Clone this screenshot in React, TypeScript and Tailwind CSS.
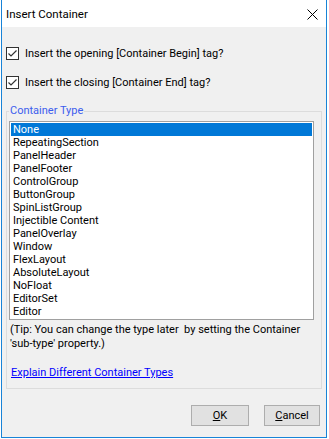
import React, { useState } from 'react';

const TYPES = [
  'None',
  'RepeatingSection',
  'PanelHeader',
  'PanelFooter',
  'ControlGroup',
  'ButtonGroup',
  'SpinListGroup',
  'Injectible Content',
  'PanelOverlay',
  'Window',
  'FlexLayout',
  'AbsoluteLayout',
  'NoFloat',
  'EditorSet',
  'Editor',
];

function CheckBox({ checked, onToggle, label }: { checked: boolean; onToggle: () => void; label: string }) {
  return (
    <label className="flex h-[13px] items-center gap-[6px] cursor-default" onClick={onToggle}>
      <span className="flex h-[13px] w-[13px] shrink-0 items-center justify-center border border-[#333333] bg-white">
        {checked && (
          <svg width="11" height="11" viewBox="0 0 11 11">
            <polyline points="1.5,5.5 4,8 9.5,2.5" fill="none" stroke="#333333" strokeWidth="1.2" />
          </svg>
        )}
      </span>
      <span className="leading-[13px] text-black">{label}</span>
    </label>
  );
}

export default function App() {
  const [openTag, setOpenTag] = useState(true);
  const [closeTag, setCloseTag] = useState(true);
  const [selected, setSelected] = useState('None');

  return (
    <div className="h-[439px] w-[329px] bg-white font-['Roboto',sans-serif] text-[11px] text-black">
      <div className="ml-px flex h-[438px] w-[326px] flex-col border-x border-b border-[#1883d7]">
        {/* title bar */}
        <div className="flex h-[27px] shrink-0 items-center justify-between bg-white pl-[4px] pr-[8px] pt-[2px]">
          <span className="text-[11.5px] text-black">Insert Container</span>
          <svg width="11" height="11" viewBox="0 0 11 11" className="mb-[1px]">
            <path d="M0.5 0.5 L10.5 10.5 M10.5 0.5 L0.5 10.5" stroke="#000" strokeWidth="1" />
          </svg>
        </div>

        {/* body */}
        <div className="flex flex-1 flex-col bg-[#f0f0f0] px-[4px] pt-[20px]">
          <CheckBox checked={openTag} onToggle={() => setOpenTag(!openTag)} label="Insert the opening [Container Begin] tag?" />
          <div className="mt-[16px]">
            <CheckBox checked={closeTag} onToggle={() => setCloseTag(!closeTag)} label="Insert the closing [Container End] tag?" />
          </div>

          {/* group box */}
          <div className="relative mt-[22px] h-[278px] border border-[#dcdcdc] pl-[2px] pt-[9px]">
            <span className="absolute -top-[8px] left-[2px] bg-[#f0f0f0] px-px leading-[14px] text-[#3c5dee]">
              Container Type
            </span>
            <div className="h-[199px] w-[305px] border border-[#a0a0a0] bg-white p-px">
              {TYPES.map((t) => (
                <div
                  key={t}
                  onClick={() => setSelected(t)}
                  className={
                    t === selected
                      ? 'h-[13px] bg-[#0078d7] pl-[2px] leading-[13px] text-white'
                      : 'h-[13px] pl-[2px] leading-[13px] text-black'
                  }
                >
                  {t}
                </div>
              ))}
            </div>
            <p className="mt-[3px] ml-px whitespace-pre leading-[14px]">
              {'(Tip: You can change the type later  by setting the Container\n\'sub-type\' property.)'}
            </p>
            <a href="#" className="mt-[15px] ml-[2px] block w-fit leading-[14px] text-[#0000ff] underline">
              Explain Different Container Types
            </a>
          </div>

          {/* buttons */}
          <div className="mt-[16px] flex justify-end gap-[15px] pr-[2px]">
            <button className="h-[21px] w-[58px] border border-[#adadad] bg-[#e1e1e1] leading-[19px] text-black">
              <span className="underline">O</span>K
            </button>
            <button className="h-[21px] w-[56px] border border-[#adadad] bg-[#e1e1e1] leading-[19px] text-black">
              <span className="underline">C</span>ancel
            </button>
          </div>
        </div>
      </div>
    </div>
  );
}
